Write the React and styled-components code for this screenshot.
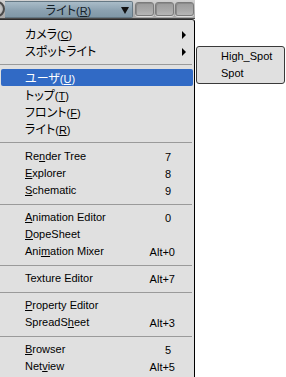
import React from "react";
import styled, { createGlobalStyle } from "styled-components";

const Global = createGlobalStyle`
  html, body { margin: 0; padding: 0; background: #ffffff; overflow: hidden; }
  body {
    font-family: "Liberation Sans", Arial, sans-serif;
    font-size: 11px;
    color: #000;
  }
`;

const Screen = styled.div`
  position: relative;
  width: 286px;
  height: 377px;
  overflow: hidden;
`;

const Bar = styled.div`
  display: flex;
  align-items: center;
  width: 195px;
  height: 19px;
  box-sizing: border-box;
  background: linear-gradient(#d2d2d2, #a6a6a6);
  border-bottom: 1px solid #4c4c4c;
`;

const Knob = styled.div`
  flex: none;
  width: 16px;
  height: 16px;
  margin-left: -11px;
  box-sizing: border-box;
  border-radius: 50%;
  border: 2px solid #4a4a4a;
  background: radial-gradient(#e8e8e8, #9a9a9a);
`;

const Field = styled.div`
  flex: none;
  width: 128px;
  height: 17px;
  box-sizing: border-box;
  display: grid;
  grid-template-columns: 14px 1fr 14px;
  align-items: center;
  background: linear-gradient(#a9bcc8, #8ca2b1 55%, #8098a7);
  border: 1px solid #657884;
  border-left: none;
  border-radius: 0 2px 2px 0;
  color: #15212a;
`;

const FieldLabel = styled.span`
  text-align: center;
  white-space: nowrap;
  line-height: 15px;
`;

const DownArrow = styled.span`
  justify-self: end;
  margin-right: 3px;
  width: 0;
  height: 0;
  border-top: 7px solid #111;
  border-left: 4px solid transparent;
  border-right: 4px solid transparent;
`;

const Buttons = styled.div`
  display: flex;
  gap: 1px;
  margin-left: 2px;
`;

const WinButton = styled.span`
  width: 19px;
  height: 14px;
  box-sizing: border-box;
  border-radius: 3px;
  border: 1px solid #7b7b7b;
  background: linear-gradient(#9b9b9b, #a9a9a9 60%, #b6b6b6);
  box-shadow: inset 1px 1px 0 #8a8a8a, 0 1px 0 #dcdcdc;
`;

const Menu = styled.div`
  width: 195px;
  box-sizing: border-box;
  background: #e0e0e0;
  border-top: 1px solid #2c2c2c;
  border-right: 1px solid #000;
  border-top-right-radius: 3px;
  padding: 5px 0 3px;
`;

const Item = styled.div`
  display: grid;
  grid-template-columns: 24px 1fr auto 18px;
  align-items: center;
  height: 17px;
  margin: 0 1px;
  border-radius: 2px;
  white-space: nowrap;
  background: ${(p) => (p.$active ? "#316ac5" : "transparent")};
  color: ${(p) => (p.$active ? "#ffffff" : "#000000")};
`;

const Label = styled.span`
  grid-column: 2;
  line-height: 17px;
`;

const Shortcut = styled.span`
  grid-column: 3;
  text-align: right;
  padding-right: ${(p) => (p.$single ? "4px" : "0")};
`;

const RightArrow = styled.span`
  grid-column: 4;
  margin-left: 7px;
  width: 0;
  height: 0;
  border-left: 4px solid #000;
  border-top: 4px solid transparent;
  border-bottom: 4px solid transparent;
`;

const Sep = styled.div`
  height: ${(p) => (p.$tall ? "11px" : "10px")};
  display: flex;
  align-items: center;
  margin-right: 2px;
  &::before {
    content: "";
    flex: 1;
    height: 1px;
    background: #9a9a9a;
  }
`;

const Kana = styled.span`
  font-family: "Noto Sans CJK JP", "Liberation Sans", sans-serif;
  font-size: 12px;
  font-feature-settings: "palt";
`;

const Key = styled.u`
  text-decoration: underline;
  text-underline-offset: 1px;
`;

const Submenu = styled.div`
  position: absolute;
  left: 196px;
  top: 46px;
  width: 89px;
  box-sizing: border-box;
  background: #e0e0e0;
  border: 1px solid #3a3a3a;
  border-radius: 3px;
  padding: 1px 0;
`;

const SubItem = styled.div`
  height: 17px;
  line-height: 17px;
  padding-left: 24px;
  white-space: nowrap;
`;

function Text({ parts }) {
  return parts.map((p, i) => {
    if (typeof p === "string") return <React.Fragment key={i}>{p}</React.Fragment>;
    if (p.k) return <Kana key={i}>{p.k}</Kana>;
    return <Key key={i}>{p.u}</Key>;
  });
}

const groups = [
  [
    { parts: [{ k: "カメラ" }, "(", { u: "C" }, ")"], arrow: true },
    { parts: [{ k: "スポットライト" }], arrow: true },
  ],
  [
    { parts: [{ k: "ユーザ" }, "(", { u: "U" }, ")"], active: true },
    { parts: [{ k: "トップ" }, "(", { u: "T" }, ")"] },
    { parts: [{ k: "フロント" }, "(", { u: "F" }, ")"] },
    { parts: [{ k: "ライト" }, "(", { u: "R" }, ")"] },
  ],
  [
    { parts: ["Re", { u: "n" }, "der Tree"], key: "7" },
    { parts: [{ u: "E" }, "xplorer"], key: "8" },
    { parts: [{ u: "S" }, "chematic"], key: "9" },
  ],
  [
    { parts: [{ u: "A" }, "nimation Editor"], key: "0" },
    { parts: [{ u: "D" }, "opeSheet"] },
    { parts: ["Ani", { u: "m" }, "ation Mixer"], key: "Alt+0" },
  ],
  [{ parts: ["Texture Editor"], key: "Alt+7" }],
  [
    { parts: [{ u: "P" }, "roperty Editor"] },
    { parts: ["SpreadS", { u: "h" }, "eet"], key: "Alt+3" },
  ],
  [
    { parts: [{ u: "B" }, "rowser"], key: "5" },
    { parts: ["Net", { u: "v" }, "iew"], key: "Alt+5" },
  ],
];

export default function App() {
  return (
    <Screen>
      <Global />
      <Bar>
        <Knob />
        <Field>
          <span />
          <FieldLabel>
            <Kana>ライト</Kana>(<Key>R</Key>)
          </FieldLabel>
          <DownArrow />
        </Field>
        <Buttons>
          <WinButton />
          <WinButton />
          <WinButton />
        </Buttons>
      </Bar>
      <Menu>
        {groups.map((g, gi) => (
          <React.Fragment key={gi}>
            {gi > 0 && <Sep $tall={gi === 2} />}
            {g.map((it, ii) => (
              <Item key={ii} $active={it.active}>
                <Label>
                  <Text parts={it.parts} />
                </Label>
                {it.key && <Shortcut $single={it.key.length === 1}>{it.key}</Shortcut>}
                {it.arrow && <RightArrow />}
              </Item>
            ))}
          </React.Fragment>
        ))}
      </Menu>
      <Submenu>
        <SubItem>High_Spot</SubItem>
        <SubItem>Spot</SubItem>
      </Submenu>
    </Screen>
  );
}
